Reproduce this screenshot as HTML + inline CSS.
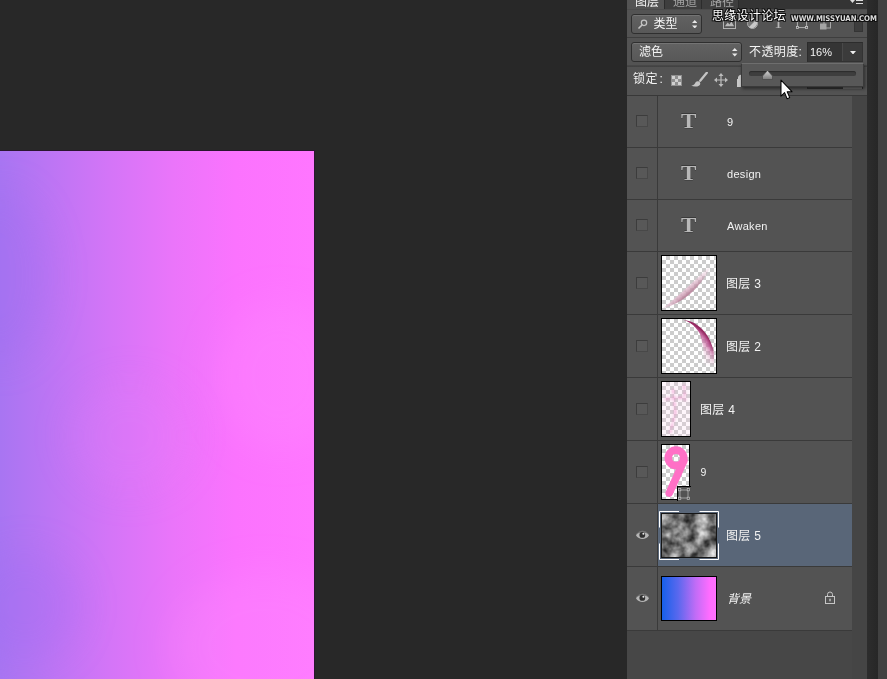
<!DOCTYPE html>
<html lang="zh-CN">
<head>
<meta charset="utf-8">
<title>图层</title>
<style>
*{box-sizing:border-box;margin:0;padding:0}
html,body{width:887px;height:679px;overflow:hidden;background:#282828}
body{position:relative;will-change:transform;font-family:"Liberation Sans","Noto Sans CJK SC",sans-serif;font-size:12px;color:#f0f0f0;line-height:1}
.abs{position:absolute}
#canvas{left:0;top:151px;width:314px;height:528px;overflow:hidden;
 background:linear-gradient(90deg,#a875f2 0%,#bb75f4 15%,#d475f7 35%,#ea75fa 55%,#fb73fe 75%,#ff76ff 100%)}
#canvas i{position:absolute;border-radius:50%;filter:blur(18px)}
#panel{left:627px;top:0;width:240px;height:679px;background:#535353}
#gut{left:867px;top:0;width:11px;height:679px;background:linear-gradient(90deg,#2d2d2d,#272727)}
#dock{left:878px;top:0;width:9px;height:679px;background:#414141}
#tabbar{left:627px;top:0;width:240px;height:10px;background:#343434;overflow:hidden;border-bottom:1px solid #4c4c4c}
.tab{position:absolute;top:0;height:9px;overflow:hidden;border-right:1px solid #2c2c2c;color:#a4a4a4;background:#3e3e3e}
.tab span{position:absolute;top:-5px;left:8px;white-space:nowrap;font-size:12px;line-height:14px}
.tab.on{background:#535353;color:#f4f4f4;height:10px}
.sep{position:absolute;left:627px;width:240px;height:1px;background:#3b3b3b}
.dd{position:absolute;border:1px solid #2f2f2f;border-radius:3px;background:linear-gradient(#626262,#585858);box-shadow:inset 0 1px 0 #747474}
.txt{position:absolute;white-space:nowrap;line-height:14px}
.field{position:absolute;background:#3a3a3a;border:1px solid #303030}
#rows{left:627px;top:96px;width:225px;height:535px;background:#535353}
#scroll{left:852px;top:96px;width:15px;height:583px;background:#454545}
#empty{left:627px;top:631px;width:225px;height:48px;background:#474747}
.row{position:absolute;left:627px;width:225px;border-bottom:1px solid #3a3a3a}
.row .eyecol{position:absolute;left:0;top:0;bottom:0;width:31px;border-right:1px solid #3a3a3a}
.row.sel .body{position:absolute;left:31px;top:0;right:0;bottom:0;background:#596678}
.cb{position:absolute;left:9px;width:12px;height:12px;background:#585858;border:1px solid #3c3c3c;border-right-color:#484848;border-bottom-color:#484848}
.thumb{position:absolute;border:1px solid #000;overflow:hidden}
.chk{background-color:#fff;background-image:linear-gradient(45deg,#ccc 25%,transparent 25%,transparent 75%,#ccc 75%),linear-gradient(45deg,#ccc 25%,transparent 25%,transparent 75%,#ccc 75%);background-size:8px 8px;background-position:0 0,4px 4px}
.name{position:absolute;white-space:nowrap;font-size:12px;line-height:14px;color:#f2f2f2;letter-spacing:.3px}
.ticon{position:absolute;transform:scaleX(1.150);transform-origin:0 0;font-family:"Liberation Serif",serif;font-weight:bold;font-size:20px;line-height:20px;color:#b8b8b8;text-shadow:0 -1px 0 #3a3a3a,0 1px 0 #444}
</style>
</head>
<body>
<div id="canvas" class="abs">
 <i style="left:215px;top:150px;width:130px;height:150px;background:rgba(255,150,255,.22)"></i>
 <i style="left:170px;top:420px;width:190px;height:150px;background:rgba(255,150,255,.22)"></i>
 <i style="left:70px;top:230px;width:120px;height:110px;background:rgba(225,130,250,.18)"></i>
 <i style="left:-50px;top:40px;width:100px;height:170px;background:rgba(150,105,238,.22)"></i>
 <i style="left:-30px;top:400px;width:110px;height:110px;background:rgba(155,105,240,.22)"></i>
</div>
<div class="abs" style="left:0;top:150px;width:315px;height:1px;background:#2a1630"></div>
<div class="abs" style="left:314px;top:150px;width:1px;height:529px;background:#2a1630"></div>

<div id="panel" class="abs"></div>
<div id="gut" class="abs"></div>
<div id="dock" class="abs"></div>

<!-- tabs -->
<div id="tabbar" class="abs">
 <div class="tab on" style="left:0;width:38px"><span>图层</span></div>
 <div class="tab" style="left:38px;width:37px"><span>通道</span></div>
 <div class="tab" style="left:75px;width:37px"><span>路径</span></div>
 <svg class="abs" style="left:223px;top:0" width="14" height="7" viewBox="0 0 14 7"><path d="M0 0h5l-2.5 3z" fill="#ddd"/><path d="M6 0.5h7M6 3.5h7" stroke="#ddd" stroke-width="1"/></svg>
</div>

<!-- filter row -->
<div class="dd" style="left:631px;top:14px;width:71px;height:20px"></div>
<svg class="abs" style="left:637.500px;top:18.500px" width="10" height="10" viewBox="0 0 12 12"><circle cx="7.2" cy="4.6" r="3.2" fill="none" stroke="#c4c4c4" stroke-width="1.5"/><path d="M4.8 7.2L1.2 10.8" stroke="#c4c4c4" stroke-width="2" stroke-linecap="round"/></svg>
<div class="txt" style="left:653.500px;top:17px;font-size:12px;color:#f4f4f4">类型</div>
<svg class="abs" style="left:691.800px;top:19.700px" width="5.500" height="8.500" viewBox="0 0 7 11"><path d="M3.5 0L7 4H0z M3.5 11L7 7H0z" fill="#e8e8e8"/></svg>

<!-- filter icons -->
<svg class="abs" style="left:723px;top:16.500px" width="13" height="12" viewBox="0 0 14 13"><rect x="0.5" y="0.5" width="13" height="12" fill="none" stroke="#b8b8b8"/><path d="M2 10l3-4 2 2 2-3 3 5z" fill="#b8b8b8"/></svg>
<svg class="abs" style="left:747px;top:18px" width="11" height="11" viewBox="0 0 11 11"><circle cx="5.5" cy="5.5" r="5" fill="#777" stroke="#aaa"/><path d="M9 2A5 5 0 0 1 2 9z" fill="#c8c8c8"/></svg>
<div class="txt" style="left:772.500px;top:14.500px;font-family:'Liberation Serif',serif;font-size:15px;line-height:16px;color:#b8b8b8;transform:scaleX(1.200);transform-origin:0 0">T</div>
<svg class="abs" style="left:795.500px;top:16.500px" width="12" height="12" viewBox="0 0 13 13"><rect x="1.5" y="1.5" width="10" height="10" fill="none" stroke="#b8b8b8"/><g fill="#535353" stroke="#c8c8c8" stroke-width=".8"><rect x=".4" y=".4" width="2.2" height="2.2"/><rect x="10.4" y=".4" width="2.2" height="2.2"/><rect x=".4" y="10.4" width="2.2" height="2.2"/><rect x="10.4" y="10.4" width="2.2" height="2.2"/></g></svg>
<svg class="abs" style="left:819px;top:17px" width="13" height="13" viewBox="0 0 13 13"><rect x="5" y="3.500" width="6.500" height="7.500" fill="none" stroke="#a8a8a8"/><rect x="1" y="6.500" width="6.500" height="6" fill="#a4a4a4"/></svg>
<div class="abs" style="left:854px;top:19px;width:9px;height:13px;background:#3d3d3d;border:1px solid #343434;border-top:2px solid #666"></div>

<div class="sep" style="top:37px;background:#3e3e3e"></div>

<!-- blend row -->
<div class="dd" style="left:631px;top:42px;width:111px;height:20px"></div>
<div class="txt" style="left:639px;top:45px;font-size:12px;color:#f4f4f4">滤色</div>
<svg class="abs" style="left:732px;top:48px" width="5.500" height="8.500" viewBox="0 0 7 11"><path d="M3.5 0L7 4H0z M3.5 11L7 7H0z" fill="#e8e8e8"/></svg>
<div class="txt" style="left:749px;top:45px;font-size:12px;color:#f4f4f4;letter-spacing:.4px">不透明度:</div>
<div class="field" style="left:807px;top:42px;width:56px;height:20px;background:#353535;border-color:#2c2c2c #333 #333 #2c2c2c"></div><div class="abs" style="left:843px;top:43px;width:19px;height:18px;background:#3b3b3b"></div>
<div class="abs" style="left:842px;top:43px;width:1px;height:18px;background:#494949"></div>
<div class="txt" style="left:810px;top:45px;font-size:11px;color:#f4f4f4">16%</div>
<svg class="abs" style="left:850px;top:50.500px" width="6" height="3.500" viewBox="0 0 7 4"><path d="M0 0h7L3.5 4z" fill="#eee"/></svg>

<div class="sep" style="top:65px;height:2px;background:linear-gradient(#494949,#404040)"></div>

<!-- lock row -->
<div class="txt" style="left:633px;top:72px;font-size:12px;color:#f4f4f4;letter-spacing:.5px">锁定<span style="margin-left:1.500px">:</span></div>
<svg class="abs" style="left:671px;top:75px" width="11" height="11" viewBox="0 0 11 11"><rect width="11" height="11" fill="#8f8f8f"/><g fill="#d0d0d0"><rect x="1" y="1" width="3" height="3"/><rect x="7" y="1" width="3" height="3"/><rect x="4" y="4" width="3" height="3"/><rect x="1" y="7" width="3" height="3"/><rect x="7" y="7" width="3" height="3"/></g></svg>
<svg class="abs" style="left:691px;top:72px" width="17" height="15" viewBox="0 0 17 15"><path d="M15.800 0.800L9.200 8.800" stroke="#c4c4c4" stroke-width="2.300" stroke-linecap="round"/><path d="M0.300 13.600c2.600-.2 3.400-1.600 4.300-3.300 1.200-1.700 3.700-1.300 4.500.4.700 1.900-1 3.500-3.700 3.800-2.100.2-3.900-.1-5.100-.9z" fill="#c4c4c4"/></svg>
<svg class="abs" style="left:714px;top:73px" width="14" height="14" viewBox="0 0 14 14"><path d="M7 0l2.500 3H7.600v3.400H11V4.500L14 7l-3 2.500V7.600H7.600V11h1.900L7 14 4.500 11h1.900V7.600H3v1.900L0 7l3-2.500v1.900h3.400V3H4.500z" fill="#bcbcbc"/></svg>
<svg class="abs" style="left:737px;top:74px" width="6" height="13" viewBox="0 0 6 13"><path d="M1 5V3.500A3 3 0 0 1 6 1.500V13H0V5z" fill="#c8c8c8"/></svg>
<div class="field" style="left:807px;top:70px;width:56px;height:19px"></div><div class="abs" style="left:843px;top:87px;width:19px;height:2px;background:#6a6a6a"></div>

<div class="sep" style="top:95px;background:#383838"></div>

<div id="rows" class="abs"></div>
<div id="scroll" class="abs"></div>
<div id="empty" class="abs"></div>

<!-- row 1 -->
<div class="row" style="top:96px;height:52px"><div class="eyecol"></div><div class="cb" style="top:19px"></div>
 <div class="ticon" style="left:54px;top:15px">T</div><div class="name" style="left:100px;top:19px;font-size:11px">9</div></div>
<div class="row" style="top:148px;height:52px"><div class="eyecol"></div><div class="cb" style="top:19px"></div>
 <div class="ticon" style="left:54px;top:15px">T</div><div class="name" style="left:100px;top:19px;font-size:11px">design</div></div>
<div class="row" style="top:200px;height:52px"><div class="eyecol"></div><div class="cb" style="top:19px"></div>
 <div class="ticon" style="left:54px;top:15px">T</div><div class="name" style="left:100px;top:19px;font-size:11px">Awaken</div></div>

<!-- 图层 3 -->
<div class="row" style="top:252px;height:63px"><div class="eyecol"></div><div class="cb" style="top:25px"></div>
 <div class="thumb chk" style="left:34px;top:3px;width:56px;height:56px">
  <svg width="54" height="54" viewBox="0 0 54 54"><defs><linearGradient id="g3" gradientUnits="userSpaceOnUse" x1="20" y1="28" x2="27.500" y2="36.500"><stop offset="0.200" stop-color="#fff" stop-opacity=".9"/><stop offset=".55" stop-color="#e6c2d4" stop-opacity=".85"/><stop offset="1" stop-color="#b88099" stop-opacity=".9"/></linearGradient><linearGradient id="m3g" x1="0" y1="1" x2="1" y2="0"><stop offset="0" stop-color="#fff" stop-opacity=".55"/><stop offset=".25" stop-color="#fff" stop-opacity="1"/><stop offset=".6" stop-color="#fff" stop-opacity=".8"/><stop offset=".92" stop-color="#fff" stop-opacity="0"/></linearGradient><mask id="m3"><rect width="54" height="54" fill="url(#m3g)"/></mask></defs><path mask="url(#m3)" d="M0.500 52.500Q31.500 44 48 12L45 12.500Q18.500 38.500 0.500 52.500z" fill="url(#g3)"/></svg>
 </div><div class="name" style="left:99px;top:25px">图层 3</div></div>

<!-- 图层 2 -->
<div class="row" style="top:315px;height:63px"><div class="eyecol"></div><div class="cb" style="top:25px"></div>
 <div class="thumb chk" style="left:34px;top:3px;width:56px;height:56px">
  <svg width="54" height="54" viewBox="0 0 54 54"><defs><radialGradient id="g2" gradientUnits="userSpaceOnUse" cx="10" cy="44" r="44"><stop offset=".66" stop-color="#e8a0c4" stop-opacity="0"/><stop offset=".8" stop-color="#dc8ab8" stop-opacity=".4"/><stop offset=".93" stop-color="#bc5090" stop-opacity=".85"/><stop offset="1" stop-color="#962a62"/></radialGradient><linearGradient id="m2g" x1="0" y1="0" x2="0" y2="1"><stop offset="0" stop-color="#fff"/><stop offset=".5" stop-color="#fff"/><stop offset=".88" stop-color="#fff" stop-opacity="0"/></linearGradient><mask id="m2"><rect width="54" height="54" fill="url(#m2g)"/></mask></defs><path mask="url(#m2)" d="M21 0.700C26 1.500 30 2.500 33 4.400 37 7 40 9.500 42.400 12.800 45.500 16.500 47.500 20 49 24 50.500 28 51.500 31 51.800 33.500L52 50H42C42 44 42 34 40.500 25.800 39.500 21 39 18 37.700 14.600 35.500 11 33.500 8.500 31.200 6.300 28 3.500 25 2 21 0.700z" fill="url(#g2)"/></svg>
 </div><div class="name" style="left:99px;top:25px">图层 2</div></div>

<!-- 图层 4 -->
<div class="row" style="top:378px;height:63px"><div class="eyecol"></div><div class="cb" style="top:25px"></div>
 <div class="thumb chk" style="left:34px;top:3px;width:30px;height:56px">
  <svg width="28" height="54" viewBox="0 0 28 54"><defs><filter id="b4" x="-20%" y="-20%" width="140%" height="140%"><feGaussianBlur stdDeviation="1.100"/></filter></defs><rect width="28" height="54" fill="#fbd0ec" fill-opacity=".22"/><g filter="url(#b4)" stroke="#f090cc" stroke-opacity=".55" stroke-width="2.600" stroke-linecap="round" stroke-dasharray="3 3.500" fill="none"><path d="M4 17l18-1.500M11 8l2.500 24M13.500 30l-5 20M22 4l1 14"/></g></svg>
 </div><div class="name" style="left:73px;top:25px">图层 4</div></div>

<!-- 9 smart object -->
<div class="row" style="top:441px;height:63px"><div class="eyecol"></div><div class="cb" style="top:25px"></div>
 <div class="thumb chk" style="left:34px;top:3px;width:29px;height:56px">
  <svg width="27" height="54" viewBox="0 0 27 54"><circle cx="14" cy="12.800" r="7.700" fill="none" stroke="#ff70c6" stroke-width="7.600"/><path d="M21.800 16L7.300 48" stroke="#ff70c6" stroke-width="7.600" stroke-linecap="round"/></svg>
 </div>
 <div class="abs" style="left:50px;top:45px;width:14px;height:15px;background:#535353;border-left:1px solid #000;border-top:1px solid #000"></div>
 <svg class="abs" style="left:51px;top:47px" width="12" height="12" viewBox="0 0 12 12"><rect x="2" y="2" width="8" height="8" fill="none" stroke="#a8a8a8" stroke-width=".9"/><g fill="#535353" stroke="#c0c0c0" stroke-width=".7"><rect x=".6" y=".6" width="2.200" height="2.200"/><rect x="9.200" y=".6" width="2.200" height="2.200"/><rect x=".6" y="9.200" width="2.200" height="2.200"/><rect x="9.200" y="9.200" width="2.200" height="2.200"/></g></svg>
 <div class="name" style="left:73.500px;top:24px;font-size:10.500px">9</div></div>

<!-- 图层 5 selected -->
<div class="row sel" style="top:504px;height:63px"><div class="eyecol"></div><div class="body"></div>
 <svg class="abs" style="left:9px;top:26px" width="13" height="10" viewBox="0 0 13 10" overflow="visible"><path d="M0 5.200C2.800 -0.600 10.200 -0.600 13 5.200 10.200 10.300 2.800 10.300 0 5.200z" fill="#b6b6b6"/><path d="M0.200 4.800C3 -0.800 10 -0.800 12.800 4.800 10 1.600 3 1.600 0.200 4.800z" fill="#3c3c3c" fill-opacity=".55"/><circle cx="6.300" cy="4.900" r="2.900" fill="#303030"/><circle cx="7.400" cy="3.800" r="1" fill="#e8e8e8"/></svg>
 <div class="thumb" id="cloud" style="left:34px;top:9px;width:56px;height:45px;background:#888;border-color:#161616">
  <svg width="54" height="44" viewBox="0 0 54 44"><defs><filter id="nz" x="0" y="0" width="100%" height="100%" color-interpolation-filters="sRGB"><feTurbulence type="fractalNoise" baseFrequency="0.085" numOctaves="3" seed="4"/><feColorMatrix type="matrix" values="1.150 0 0 0 -0.090  1.150 0 0 0 -0.090  1.150 0 0 0 -0.090  0 0 0 0 1"/><feGaussianBlur stdDeviation="0.45"/></filter></defs><rect x="-6" y="-6" width="66" height="56" fill="#888" filter="url(#nz)"/></svg>
 </div>
 <svg class="abs" style="left:32px;top:7px" width="60" height="49" viewBox="0 0 60 49"><path d="M0.500 16.500V0.500H20M40.500 0.500H59.500V16.500M59.500 32.500V48.500H40.500M20 48.500H0.500V32.500" fill="none" stroke="#fff"/></svg>
 <div class="name" style="left:99px;top:25px">图层 5</div></div>

<!-- 背景 -->
<div class="row" style="top:567px;height:64px"><div class="eyecol"></div>
 <svg class="abs" style="left:9px;top:26px" width="13" height="10" viewBox="0 0 13 10" overflow="visible"><path d="M0 5.200C2.800 -0.600 10.200 -0.600 13 5.200 10.200 10.300 2.800 10.300 0 5.200z" fill="#b6b6b6"/><path d="M0.200 4.800C3 -0.800 10 -0.800 12.800 4.800 10 1.600 3 1.600 0.200 4.800z" fill="#3c3c3c" fill-opacity=".55"/><circle cx="6.300" cy="4.900" r="2.900" fill="#303030"/><circle cx="7.400" cy="3.800" r="1" fill="#e8e8e8"/></svg>
 <div class="thumb" style="left:34px;top:9px;width:56px;height:45px;background:linear-gradient(90deg,#1660ea 0%,#5a68ee 30%,#c06cf6 62%,#ff6cff 88%,#ff70ff 100%)"></div>
 <div class="name" style="left:100px;top:25px;font-style:italic;letter-spacing:0">背景</div>
 <svg class="abs" style="left:197px;top:24px" width="12" height="13" viewBox="0 0 12 13"><path d="M3.500 5.500V3.500A2.500 2.500 0 0 1 8.500 3.500V5.500" fill="none" stroke="#c6c6c6" stroke-width="1"/><rect x="1.500" y="5.500" width="9" height="7" fill="none" stroke="#c6c6c6" stroke-width="1"/><rect x="5.300" y="7.700" width="1.400" height="2.600" fill="#c6c6c6"/></svg>
</div>

<!-- opacity popup -->
<div class="abs" style="left:741px;top:63px;width:123px;height:24px;background:#585858;border:1px solid #3a3a3a;border-top-color:#6e6e6e;box-shadow:1px 2px 3px rgba(0,0,0,.45)"></div>
<div class="abs" style="left:749px;top:71px;width:107px;height:5px;border-radius:3px;background:#3e3e3e;box-shadow:inset 0 1px 1px #2c2c2c"></div>
<svg class="abs" style="left:762px;top:70px" width="11" height="10" viewBox="0 0 11 10"><defs><linearGradient id="th" x1="0" y1="0" x2="0" y2="1"><stop offset="0" stop-color="#d8d8d8"/><stop offset="1" stop-color="#7a7a7a"/></linearGradient></defs><path d="M5.500 0.500L10.500 6V9.500H0.500V6z" fill="url(#th)" stroke="#4a4a4a" stroke-width=".8"/></svg>

<!-- cursor -->
<svg class="abs" style="left:780.300px;top:79.200px" width="14" height="20.800" viewBox="0 0 14 20" preserveAspectRatio="none"><path d="M1 1v15.500l3.600-3.400 2.500 5.900 2.600-1.100-2.500-5.700H12z" fill="#fff" stroke="#000" stroke-width="1" stroke-linejoin="round"/></svg>

<!-- watermark -->
<div class="txt" style="left:712px;top:9px;font-size:12px;line-height:14px;letter-spacing:.3px;color:#fff;font-weight:400;text-shadow:-1px 0 #111,1px 0 #111,0 -1px #111,0 1px #111,1px 1px #111,-1px -1px #111,1px -1px #111,-1px 1px #111">思缘设计论坛</div>
<div class="txt" style="left:791px;top:13px;font-family:'DejaVu Sans','Liberation Sans',sans-serif;font-weight:bold;font-size:7px;line-height:11px;letter-spacing:-.08px;color:#dcdcdc;transform-origin:0 0;transform:scale(1.0,1.120);text-shadow:-1px 0 #111,1px 0 #111,0 -1px #111,0 1px #111,1px 1px #111,-1px -1px #111,1px -1px #111,-1px 1px #111">WWW.MISSYUAN.COM</div>
</body>
</html>
